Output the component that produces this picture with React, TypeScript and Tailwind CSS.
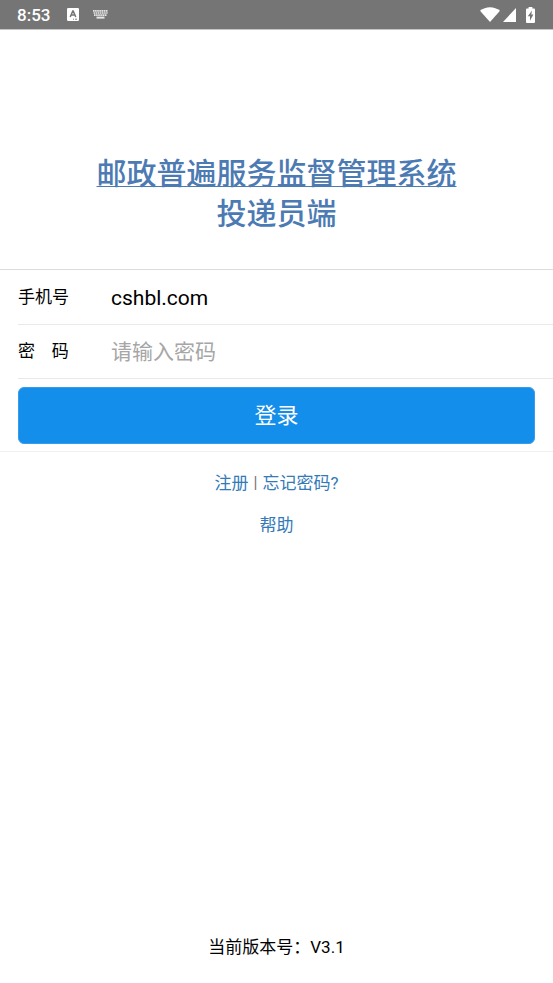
import React, { useState } from 'react';

const StatusBar = () => (
  <header className="flex h-[30px] items-center justify-between border-b border-[#c4c4c4] bg-[#757575] pl-[17px] pr-[18px] text-white">
    <div className="flex items-center">
      <span className="text-[17px] font-medium leading-5">8:53</span>
      <svg className="ml-[17px] h-[13px] w-3" viewBox="0 0 12 13" aria-hidden="true">
        <rect width="12" height="13" rx="1.2" fill="white" />
        <path d="M3.2 9 L5.8 3 H6.2 L8.800 9 M4.2 7 H7.8" fill="none" stroke="#757575" strokeWidth="1.5" />
        <path d="M6 11.2h1M8 11.2h2" stroke="#757575" strokeWidth="0.9" />
      </svg>
      <svg className="ml-[14px] h-[9px] w-[15px]" viewBox="0 0 15 9" aria-hidden="true">
        <path d="M0 .9h15M.6 3h14M1 5.100h13" stroke="#e6e6e6" strokeWidth="1.7" strokeDasharray="1.6 .5" fill="none" />
        <path d="M3.5 7.600h8" stroke="#e6e6e6" strokeWidth="2" />
      </svg>
    </div>
    <div className="flex items-center">
      <svg className="h-[15px] w-5" viewBox="0 0 20 15" aria-hidden="true">
        <path d="M0 3.8C5.5-.9 14.5-.9 20 3.8L10 15Z" fill="white" />
      </svg>
      <svg className="ml-[3px] h-[14px] w-[13px]" viewBox="0 0 13 14" aria-hidden="true">
        <path d="M13 0v14H0Z" fill="white" />
      </svg>
      <svg className="ml-[10px] h-4 w-[9px]" viewBox="0 0 9 16" aria-hidden="true">
        <path d="M2.6 0h3.8v1.6h1.6a1 1 0 0 1 1 1V15a1 1 0 0 1-1 1H1a1 1 0 0 1-1-1V2.6a1 1 0 0 1 1-1h1.6Z" fill="white" />
        <path d="M6 3.400 1.800 9.300h2.200v4.500L7.400 7.600H5.300Z" fill="#757575" />
      </svg>
    </div>
  </header>
);

interface FieldProps {
  id: string;
  label: string;
  type: string;
  value: string;
  placeholder?: string;
  onChange: (value: string) => void;
}

const Field = ({ id, label, type, value, placeholder, onChange }: FieldProps) => (
  <div className="ml-[18px] flex h-[54px] items-center border-b border-[#e9e9e9]">
    <label htmlFor={id} className="w-[93px] shrink-0 whitespace-pre text-[17px]">
      {label}
    </label>
    <input
      id={id}
      type={type}
      value={value}
      placeholder={placeholder}
      onChange={(e) => onChange(e.target.value)}
      className="h-full min-w-0 flex-1 bg-transparent text-[21px] outline-none placeholder:text-[#a6a6a6]"
    />
  </div>
);

export default function App() {
  const [phone, setPhone] = useState('cshbl.com');
  const [password, setPassword] = useState('');

  return (
    <div className="flex min-h-screen flex-col bg-white font-[Roboto,'Noto_Sans_CJK_SC',sans-serif] text-black">
      <StatusBar />

      <main className="flex flex-1 flex-col">
        <h1 className="pb-[35px] pt-[124px] text-center text-[30px] font-medium leading-10 text-[#4c7ab3]">
          <span className="underline decoration-1 underline-offset-2">邮政普遍服务监督管理系统</span>
          <br />
          投递员端
        </h1>

        <form
          className="border-b border-t border-b-[#f0f0f0] border-t-[#dcdcdc] pt-px"
          onSubmit={(e) => e.preventDefault()}
        >
          <Field id="phone" label="手机号" type="text" value={phone} onChange={setPhone} />
          <Field
            id="password"
            label="密    码"
            type="password"
            value={password}
            placeholder="请输入密码"
            onChange={setPassword}
          />
          <div className="px-[18px] pb-[7px] pt-2">
            <button type="submit" className="block h-[57px] w-full rounded-md border border-[#3a9ce8] bg-[#138eeb] text-[22px] text-white">
              登录
            </button>
          </div>
        </form>

        <nav className="flex flex-col items-center gap-4 pt-[18px] text-[17px] leading-[26px] text-[#337ab7]">
          <div className="flex items-center gap-[5px]">
            <a href="#register">注册</a>
            <span className="text-base leading-[26px] text-[#777777]">|</span>
            <a href="#forgot">忘记密码?</a>
          </div>
          <a href="#help">帮助</a>
        </nav>
      </main>

      <footer className="pb-6 text-center text-[17px] leading-6">当前版本号：V3.1</footer>
    </div>
  );
}
